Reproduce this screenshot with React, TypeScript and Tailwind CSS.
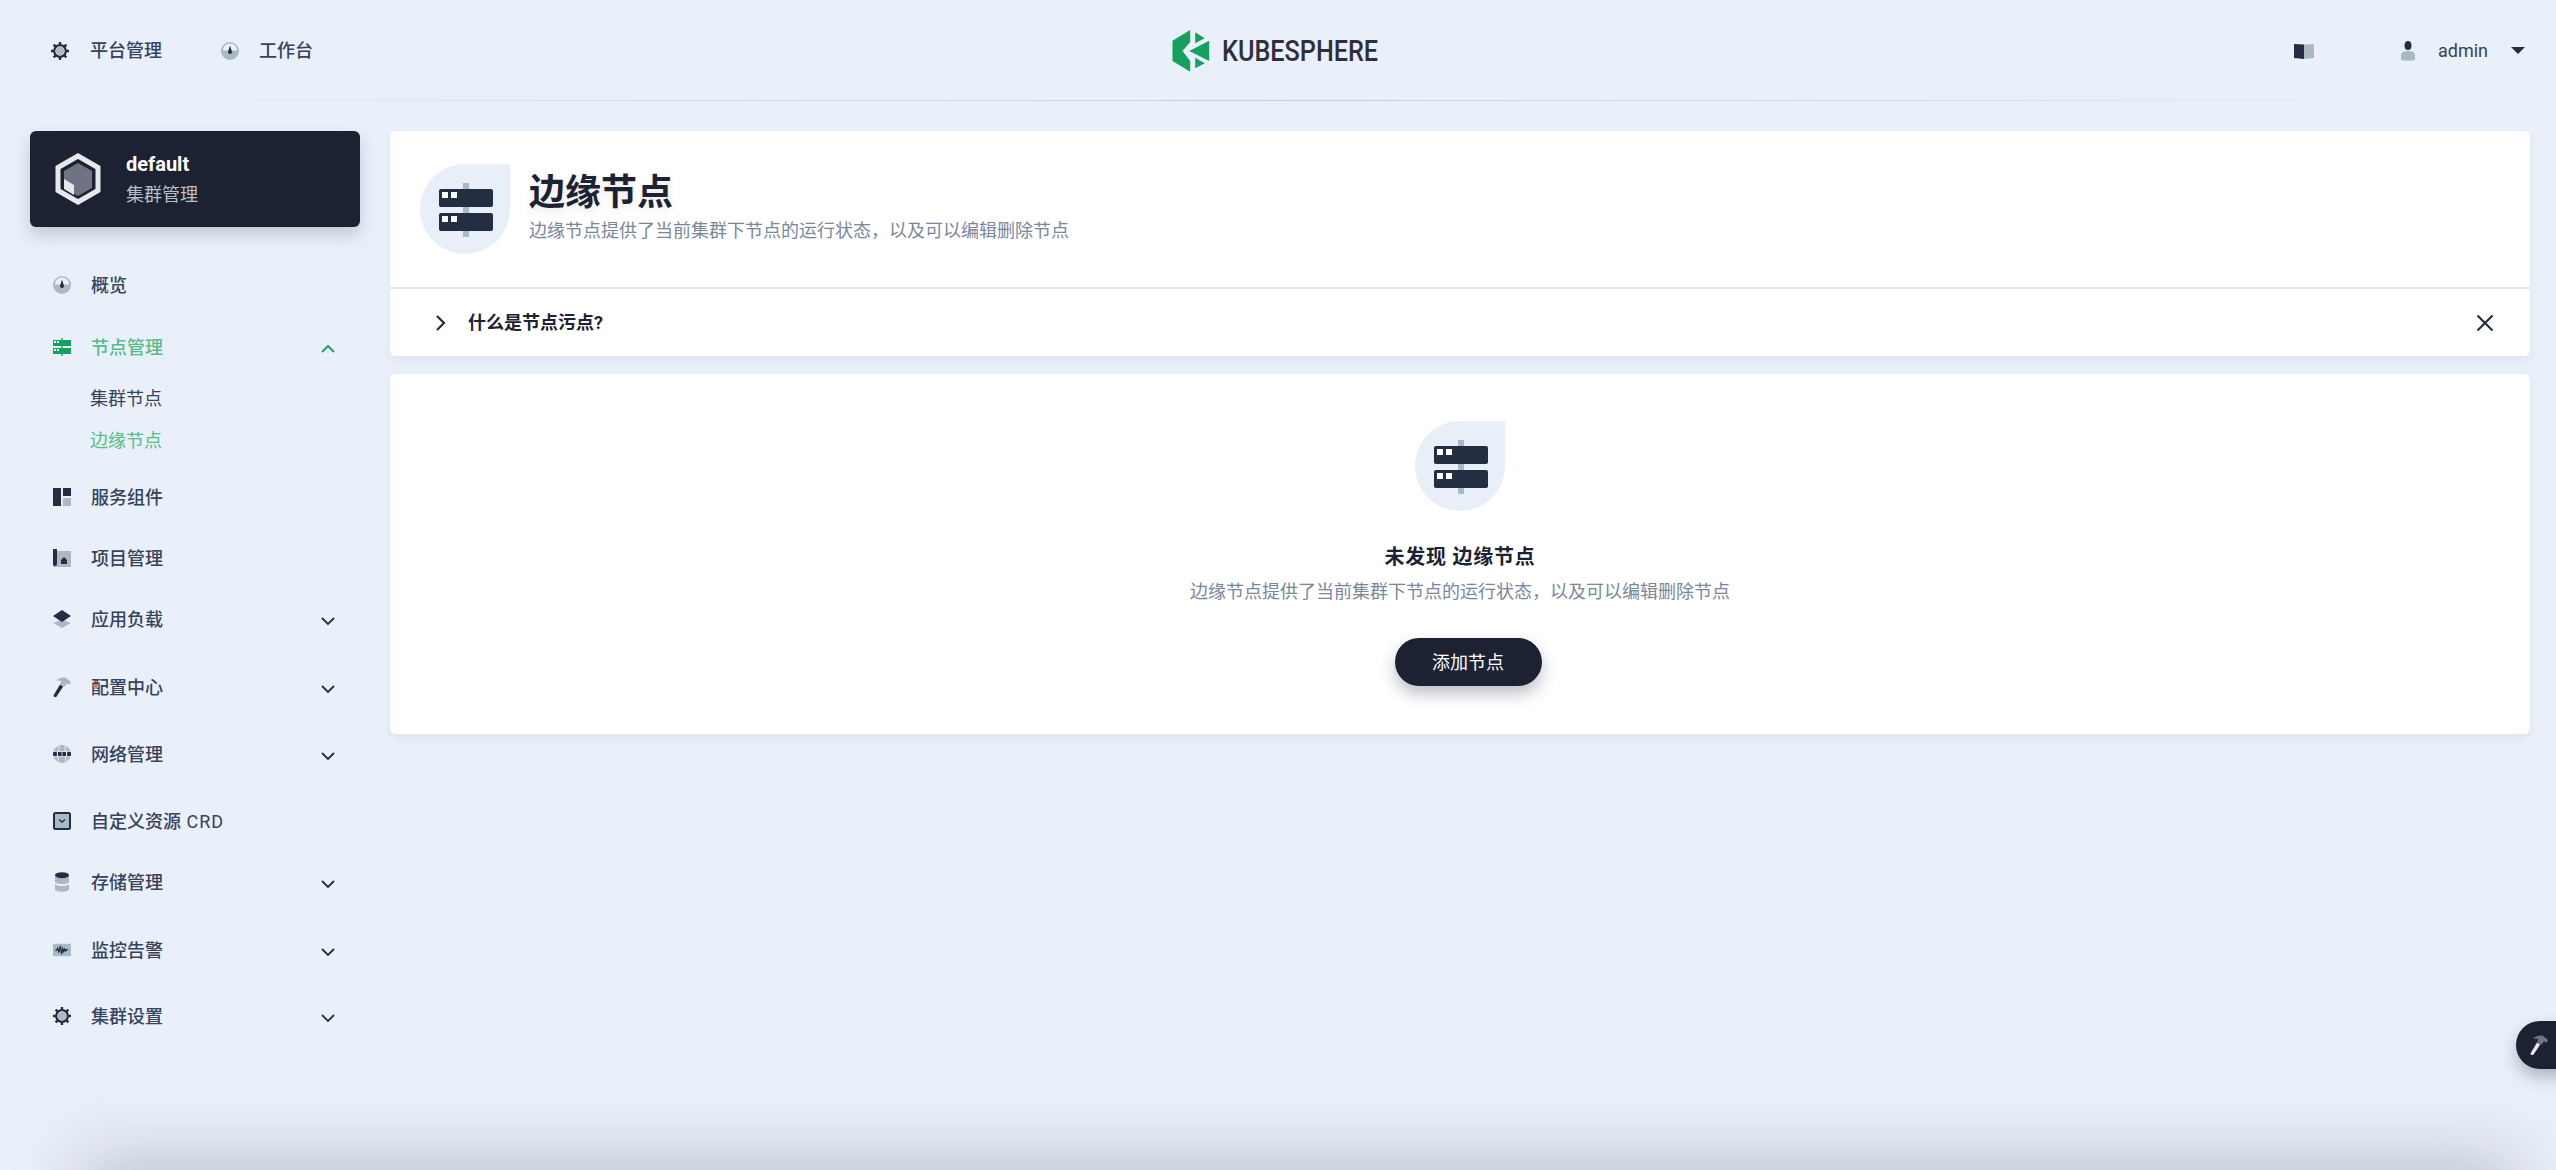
import React from "react";

const D = "#242e42";
const L = "#abb8c6";
const BG = "#eaf0f9";

const Gear = () => (
  <svg width="18" height="18" viewBox="0 0 18 18">
    <circle cx="9" cy="9" r="5.8" fill="none" stroke={D} strokeWidth="2.2" />
    <circle cx="9" cy="9" r="4" fill={L} />
    <g stroke={D} strokeWidth="2.4">
      <path d="M9 0v3M9 15v3M0 9h3M15 9h3M2.6 2.6l2.1 2.1M13.3 13.3l2.1 2.1M2.6 15.4l2.1-2.1M13.3 4.7l2.1-2.1" />
    </g>
  </svg>
);
const Dash = () => (
  <svg width="18" height="18" viewBox="0 0 18 18">
    <circle cx="9" cy="9" r="9" fill={L} />
    <path d="M2 8.500a7 7 0 0 1 14 0z" fill="#eef2f8" />
    <path d="M9 3.500l1.900 6a2 2 0 1 1-3.800 0z" fill={D} />
  </svg>
);
const NodeIcon = ({ c = D, p = L }: { c?: string; p?: string }) => (
  <svg width="18" height="18" viewBox="0 0 18 18">
    <rect x="8" y="0" width="2" height="18" fill={p} />
    <rect x="0" y="2" width="18" height="6" fill={c} />
    <rect x="0" y="10" width="18" height="6" fill={c} />
    <rect x="1" y="3" width="2" height="2" fill="#fff" />
    <rect x="4" y="3" width="2" height="2" fill="#fff" />
    <rect x="1" y="11" width="2" height="2" fill="#fff" />
    <rect x="4" y="11" width="2" height="2" fill="#fff" />
  </svg>
);
const Comp = () => (
  <svg width="18" height="18" viewBox="0 0 18 18">
    <rect x="0" y="0" width="8" height="18" fill={D} />
    <rect x="10" y="0" width="8" height="8" fill={D} />
    <rect x="10" y="10" width="8" height="8" fill={L} />
  </svg>
);
const Project = () => (
  <svg width="18" height="18" viewBox="0 0 18 18">
    <rect x="0" y="2" width="18" height="16" fill={L} />
    <path d="M0 1a2 2 0 0 1 4 0v14a2 2 0 0 1-4 0z" fill={D} />
    <path d="M8 11l3-3 3 3v4H8z" fill={D} />
  </svg>
);
const Layers = () => (
  <svg width="18" height="18" viewBox="0 0 18 18">
    <path d="M9 9.500l9 3.500-9 5-9-5z" fill={L} />
    <path d="M9 0l9 6-9 6-9-6z" fill={D} />
  </svg>
);
const Hammer = ({ h = D, m = L }: { h?: string; m?: string }) => (
  <svg width="18" height="20" viewBox="0 0 18 20">
    <path d="M7 7.500l3.200 2L3.600 19.400a1.500 1.500 0 0 1-2.700-1.700z" fill={h} />
    <path d="M3 3.500C6 .5 10 0 13 .8l5 4.200-1.500 2.400-2.400-1-2.800 3.400L7 7 8.400 4.600C6.800 3.600 5 3.400 3 3.500z" fill={m} />
  </svg>
);
const Globe = () => (
  <svg width="18" height="18" viewBox="0 0 18 18">
    <circle cx="9" cy="9" r="9" fill={L} />
    <path d="M6 1L5 17M12 1l1 16" stroke={BG} strokeWidth="1" fill="none" />
    <rect x="-0.5" y="6.500" width="19" height="5" fill={BG} />
    <rect x="0" y="7" width="4" height="4" rx="1" fill={D} />
    <rect x="5" y="7" width="8" height="4" fill={D} />
    <rect x="14" y="7" width="4" height="4" rx="1" fill={D} />
    <rect x="8.600" y="6" width="0.8" height="6" fill={BG} />
  </svg>
);
const Crd = () => (
  <svg width="18" height="18" viewBox="0 0 18 18">
    <rect x="1" y="1" width="16" height="16" rx="1.500" fill={L} stroke={D} strokeWidth="2" />
    <path d="M6 7.500l3 2.500 3-2.500" fill="none" stroke={D} strokeWidth="1.500" />
  </svg>
);
const Storage = () => (
  <svg width="18" height="20" viewBox="0 0 18 20">
    <path d="M2 4.500v5c0 1.500 3 2.600 7 2.600s7-1.100 7-2.600v-5z" fill={L} />
    <path d="M2 12v5c0 1.600 3 2.800 7 2.800s7-1.200 7-2.800v-5c-1 1.400-4 2-7 2s-6-.6-7-2z" fill={L} />
    <ellipse cx="9" cy="3.200" rx="7" ry="3" fill={D} />
  </svg>
);
const Monitor = () => (
  <svg width="20" height="14" viewBox="0 0 20 14">
    <rect x="0" y="0" width="20" height="14" rx="1.500" fill={L} />
    <path d="M2.500 7.500h1.500l1.200-2.500 1.400 5 1.600-7.500 1.400 9 1.300-6 1 3 1-2.500 1 2 1-1.500h1.600" fill="none" stroke={D} strokeWidth="1.400" />
  </svg>
);
const Chevron = ({ up, c = D }: { up?: boolean; c?: string }) => (
  <svg width="16" height="16" viewBox="0 0 16 16" fill="none" className="mt-1">
    <path d={up ? "M2 11l6-6 6 6" : "M2 5l6 6 6-6"} stroke={c} strokeWidth="1.800" />
  </svg>
);

const Drop = () => (
  <svg width="90" height="90" viewBox="0 0 90 90" className="shrink-0">
    <path d="M90 0v45a45 45 0 1 1-45-45z" fill="#e9eff8" />
    <rect x="43" y="19" width="6" height="54" fill={L} />
    <rect x="19" y="25" width="54" height="18" rx="2" fill={D} />
    <rect x="19" y="49" width="54" height="18" rx="2" fill={D} />
    <rect x="22" y="28" width="6" height="6" fill="#fff" />
    <rect x="31" y="28" width="6" height="6" fill="#fff" />
    <rect x="22" y="52" width="6" height="6" fill="#fff" />
    <rect x="31" y="52" width="6" height="6" fill="#fff" />
  </svg>
);

const Logo = () => (
  <svg width="38" height="42" viewBox="0 0 37 42" className="shrink-0">
    <path d="M17.700 0L0 10.700V31l17.700 10.700V31L10 21l7.700-9z" fill="#16a05f" />
    <path d="M22.700 2.300l9.600 6-9.600 5zM36.700 10.700V31L16.700 21zM22.700 27.700l9.600 5.600-9.600 5z" fill="#16a05f" />
  </svg>
);

const rows: {
  id: string;
  label: React.ReactNode;
  icon: React.ReactNode;
  mt: string;
  chevron?: boolean;
}[] = [
  { id: "svc", label: "服务组件", icon: <Comp />, mt: "mt-[12px]" },
  { id: "prj", label: "项目管理", icon: <Project />, mt: "mt-[13px]" },
  { id: "app", label: "应用负载", icon: <Layers />, mt: "mt-[13px]", chevron: true },
  { id: "cfg", label: "配置中心", icon: <Hammer />, mt: "mt-[20px]", chevron: true },
  { id: "net", label: "网络管理", icon: <Globe />, mt: "mt-[19px]", chevron: true },
  {
    id: "crd",
    label: (
      <>
        自定义资源 <span className="ml-[1px] font-normal tracking-[1px]">CRD</span>
      </>
    ),
    icon: <Crd />,
    mt: "mt-[19px]",
  },
  { id: "sto", label: "存储管理", icon: <Storage />, mt: "mt-[13px]", chevron: true },
  { id: "mon", label: "监控告警", icon: <Monitor />, mt: "mt-[20px]", chevron: true },
  { id: "set", label: "集群设置", icon: <Gear />, mt: "mt-[18px]", chevron: true },
];

const Row = ({
  label,
  icon,
  mt,
  chevron,
  active,
  up,
}: {
  label: React.ReactNode;
  icon: React.ReactNode;
  mt: string;
  chevron?: boolean;
  active?: boolean;
  up?: boolean;
}) => (
  <div className={`flex h-[48px] items-center pl-[23px] pr-[24px] ${mt}`}>
    <span className="flex w-[18px] shrink-0 justify-center">{icon}</span>
    <span className={`ml-[20px] flex-1 text-[18px] font-medium ${active ? "text-[#55bc8a]" : "text-[#36435c]"}`}>{label}</span>
    {chevron && <Chevron up={up} c={active ? "#16a05f" : D} />}
  </div>
);

export default function App() {
  return (
    <div className="relative h-[1170px] w-[2556px] overflow-hidden bg-[#eaf0f9] font-['Roboto','Noto_Sans_CJK_SC',sans-serif] text-[#242e42]">
      <header className="relative grid h-[101px] grid-cols-[1fr_auto_1fr] items-center pl-[51px] pr-[31px]">
        <div className="flex items-center">
          <Gear />
          <span className="ml-[21px] text-[18px] font-medium text-[#36435c]">平台管理</span>
          <span className="ml-[59px]"><Dash /></span>
          <span className="ml-[20px] text-[18px] font-medium text-[#36435c]">工作台</span>
        </div>
        <div className="flex w-[210px] items-center -translate-x-[11px]">
          <Logo />
          <span className="ml-[12px] origin-left scale-x-[0.84] whitespace-nowrap text-[30px] font-medium leading-none text-[#302e3b]">KUBESPHERE</span>
        </div>
        <div className="flex items-center justify-end">
          <svg width="20" height="16" viewBox="0 0 20 16">
            <path d="M0 1l10 .5V16L0 15z" fill={D} />
            <path d="M10 1.500L20 1v14l-10 1z" fill={L} />
          </svg>
          <svg width="14" height="20" viewBox="0 0 14 20" className="ml-[87px]">
            <ellipse cx="7" cy="4.500" rx="3.500" ry="4.500" fill={D} />
            <path d="M0 14c0-3 3-4 7-4s7 1 7 4v5c-2 1-12 1-14 0z" fill={L} />
          </svg>
          <span className="ml-[23px] text-[18px] text-[#36435c]">admin</span>
          <svg width="14" height="7" viewBox="0 0 14 7" className="ml-[23px]">
            <path d="M0 0h14L7 7z" fill={D} />
          </svg>
        </div>
        <div className="absolute bottom-0 left-0 right-0 h-[1px] bg-gradient-to-r from-transparent via-[#c9cfda] to-transparent" />
      </header>

      <div className="flex pl-[30px] pr-[26px]">
        <aside className="w-[330px] shrink-0 pt-[30px]">
          <div className="flex h-[96px] items-center rounded-md bg-[#1c2231] pl-[25px] shadow-[0_8px_16px_rgba(36,46,66,0.2)]">
            <svg width="46" height="52" viewBox="0 0 46 52">
              <path d="M23 3L43 14.500v23L23 49 3 37.500v-23z" fill="none" stroke="#e6e8eb" strokeWidth="5" />
              <path d="M23 10l14 8v17l-14 8-14-8V18z" fill="#6e7481" />
              <path d="M9 26l10 6v10L9 36z" fill="#e6e8eb" />
            </svg>
            <div className="ml-[25px] flex flex-col">
              <span className="text-[20px] font-bold leading-[28px] text-white">default</span>
              <span className="mt-[3px] text-[18px] leading-[28px] text-[#b9c0ca]">集群管理</span>
            </div>
          </div>

          <nav className="mt-[34px]">
            <Row label="概览" icon={<Dash />} mt="mt-0" />
            <Row label="节点管理" icon={<NodeIcon c="#16a05f" p="#55bc8a" />} mt="mt-[14px]" chevron active up />
            <div className="pl-[60px] pt-[6px] text-[18px] font-normal">
              <div className="flex h-[42px] items-center text-[#36435c]">集群节点</div>
              <div className="flex h-[42px] items-center text-[#55bc8a]">边缘节点</div>
            </div>
            {rows.map((r) => (
              <Row key={r.id} label={r.label} icon={r.icon} mt={r.mt} chevron={r.chevron} />
            ))}
          </nav>
        </aside>

        <main className="ml-[30px] flex-1 pt-[30px]">
          <section className="rounded-md bg-white shadow-[0_4px_8px_rgba(36,46,66,0.06)]">
            <div className="flex h-[158px] items-start border-b-2 border-[#dfe4ee] pl-[30px] pt-[33px]">
              <Drop />
              <div className="ml-[19px] flex flex-col">
                <h1 className="mt-[5px] text-[36px] font-semibold leading-[48px] text-[#1c2231] [text-shadow:0_4px_8px_rgba(36,46,66,0.1)]">边缘节点</h1>
                <p className="mt-[1px] text-[18px] leading-[26px] text-[#79879c]">边缘节点提供了当前集群下节点的运行状态，以及可以编辑删除节点</p>
              </div>
            </div>
            <div className="flex h-[67px] items-center pl-[44px] pr-[36px]">
              <svg width="14" height="18" viewBox="0 0 14 18" fill="none">
                <path d="M3 2l7 7-7 7" stroke={D} strokeWidth="2.200" />
              </svg>
              <span className="ml-[20px] flex-1 text-[18px] font-bold text-[#1c2231]">什么是节点污点?</span>
              <svg width="18" height="18" viewBox="0 0 18 18" fill="none">
                <path d="M1.500 1.500l15 15M16.500 1.500l-15 15" stroke={D} strokeWidth="2.200" />
              </svg>
            </div>
          </section>

          <section className="mt-[18px] flex h-[360px] flex-col items-center rounded-md bg-white pt-[47px] shadow-[0_4px_8px_rgba(36,46,66,0.06)]">
            <Drop />
            <h2 className="mt-[32px] text-[20px] font-bold leading-[28px] tracking-[0.75px] text-[#1c2231]">未发现 边缘节点</h2>
            <p className="mt-[8px] text-[18px] leading-[26px] text-[#79879c]">边缘节点提供了当前集群下节点的运行状态，以及可以编辑删除节点</p>
            <button className="ml-[16px] mt-[33px] flex h-[48px] w-[147px] items-center justify-center rounded-full bg-[#1c2231] text-[18px] text-white shadow-[0_8px_16px_rgba(36,46,66,0.3)]">添加节点</button>
          </section>
        </main>
      </div>

      <div className="absolute left-[2516px] top-[1021px] flex h-[48px] w-[60px] items-center rounded-l-full bg-[#1c2231] pl-[14px] shadow-[0_8px_16px_rgba(36,46,66,0.3)]">
        <Hammer h="#e6e8eb" m="#6e7481" />
      </div>
      <div className="absolute left-[110px] right-[70px] top-[1190px] h-[40px] shadow-[0_0_70px_30px_rgba(36,46,66,0.24)]" />
    </div>
  );
}
